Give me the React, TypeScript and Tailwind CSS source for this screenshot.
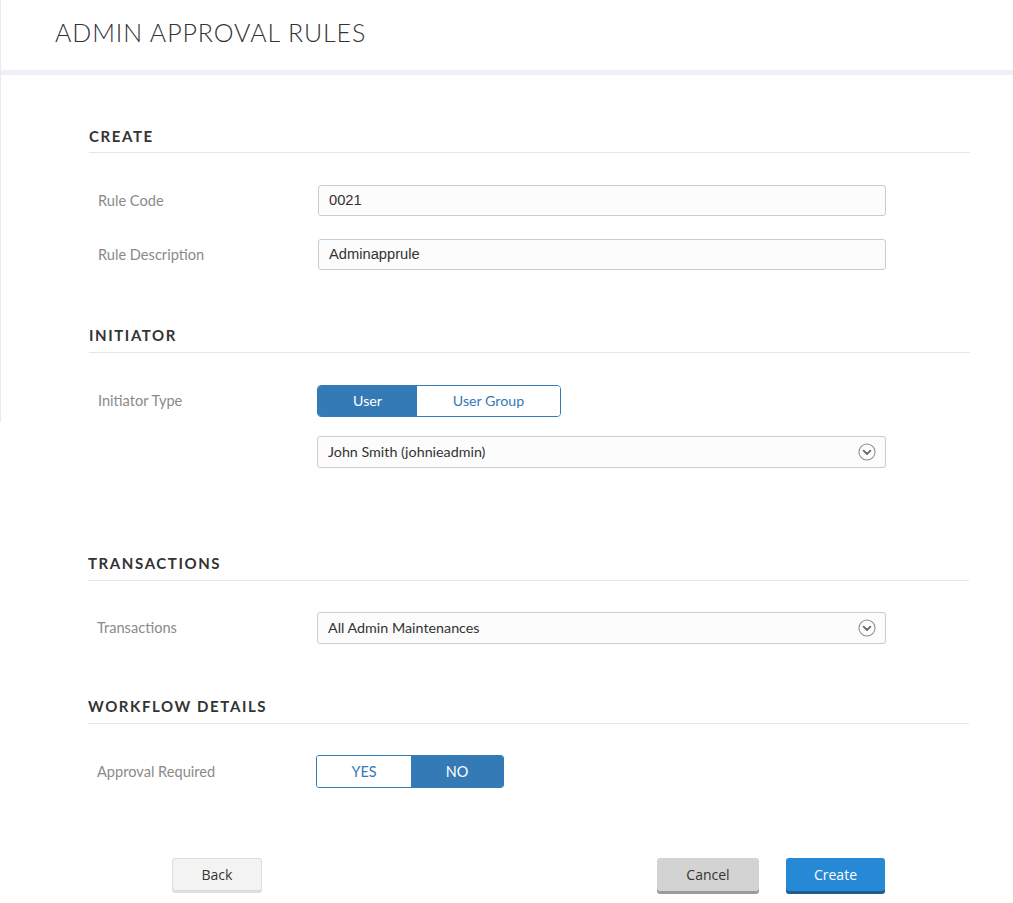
import React from "react";

const lato = "font-['Lato','Open_Sans',sans-serif]";

function Chevron() {
  return (
    <svg width="18" height="18" viewBox="0 0 18 18" className="shrink-0">
      <circle cx="9" cy="9" r="8" fill="none" stroke="#8f8f8f" strokeWidth="1.1" />
      <path d="M5.6 7.6 L9 11 L12.4 7.6" fill="none" stroke="#6a6a6a" strokeWidth="1.8" strokeLinecap="round" strokeLinejoin="round" />
    </svg>
  );
}

function Heading({ children, shift, tight }: { children: React.ReactNode; shift?: boolean; tight?: boolean }) {
  return (
    <div
      className={`${shift ? "ml-[88px]" : "ml-[89px]"} ${tight ? "pb-[6px]" : "pb-[7px]"} w-[881px] border-b border-[#e6e6e6] text-[15px] font-bold leading-[20px] tracking-[1.6px] text-[#333]`}
    >
      {children}
    </div>
  );
}

function Row({ label, children, shift }: { label: string; children: React.ReactNode; shift?: boolean }) {
  return (
    <div className={`${shift ? "ml-[88px]" : "ml-[89px]"} flex items-center`}>
      <div className="w-[229px] pl-[9px] text-[14.6px] leading-[20px] text-[#8a8a8a]">{label}</div>
      {children}
    </div>
  );
}

function TextInput({ value }: { value: string }) {
  return (
    <div className="flex h-[31px] w-[568px] items-center rounded-[3px] border border-[#cccccc] bg-[#fcfcfc] pl-[10px] font-['Liberation_Sans',Arial,sans-serif] text-[14.7px] text-[#333]">
      {value}
    </div>
  );
}

function Select({ value }: { value: string }) {
  return (
    <div className="flex h-[32px] w-[569px] items-center justify-between rounded-[3px] border border-[#cccccc] bg-[#fcfcfc] pl-[10px] pr-[9px] text-[14.3px] text-[#333]">
      <span>{value}</span>
      <Chevron />
    </div>
  );
}

export default function App() {
  return (
    <div className={`relative min-h-[903px] w-full bg-white ${lato}`}>
      <div className="absolute left-0 top-0 h-[422px] w-px bg-[#e9ebf0]" />
      <div className="h-[70px] pl-[55px] pt-[17px] text-[25px] font-light leading-[30px] tracking-[0.9px] text-[#333]">
        ADMIN APPROVAL RULES
      </div>
      <div className="h-[5px] w-full bg-[#eff0f5]" />

      <div className="pt-[51px]">
        <Heading tight>CREATE</Heading>
        <div className="mt-[32px]">
          <Row label="Rule Code">
            <TextInput value="0021" />
          </Row>
        </div>
        <div className="mt-[23px]">
          <Row label="Rule Description">
            <TextInput value="Adminapprule" />
          </Row>
        </div>

        <div className="mt-[55px]">
          <Heading>INITIATOR</Heading>
        </div>
        <div className="mt-[32px]">
          <div className="ml-[89px] flex items-center">
            <div className="w-[228px] pl-[9px] text-[14.6px] leading-[20px] text-[#8a8a8a]">Initiator Type</div>
            <div className="flex h-[32px] overflow-hidden rounded-[4px] border border-[#337ab7] text-[14.2px]">
              <div className="flex w-[99px] items-center justify-center bg-[#337ab7] text-white">User</div>
              <div className="flex w-[143px] items-center justify-center bg-white text-[#337ab7]">User Group</div>
            </div>
          </div>
        </div>
        <div className="ml-[317px] mt-[19px]">
          <Select value="John Smith (johnieadmin)" />
        </div>

        <div className="mt-[85px]">
          <Heading shift>TRANSACTIONS</Heading>
        </div>
        <div className="mt-[31px]">
          <Row label="Transactions" shift>
            <Select value="All Admin Maintenances" />
          </Row>
        </div>

        <div className="mt-[52px]">
          <Heading shift>WORKFLOW DETAILS</Heading>
        </div>
        <div className="mt-[31px]">
          <div className="ml-[88px] flex items-center">
            <div className="w-[228px] pl-[9px] text-[14.6px] leading-[20px] text-[#8a8a8a]">Approval Required</div>
            <div className="flex h-[33px] overflow-hidden rounded-[3px] border border-[#337ab7] text-[14.4px]">
              <div className="flex w-[94px] items-center justify-center bg-white text-[#337ab7]">YES</div>
              <div className="flex w-[92px] items-center justify-center bg-[#337ab7] text-white">NO</div>
            </div>
          </div>
        </div>

        <div className="mt-[70px] flex items-start font-['Open_Sans',sans-serif] text-[14px]">
          <button className="ml-[172px] h-[33px] w-[90px] rounded-[3px] border border-[#dcdcdc] bg-[#f3f3f3] text-[#333] shadow-[0_2px_0_#dedede]">
            Back
          </button>
          <button className="ml-[395px] h-[33px] w-[102px] rounded-[3px] bg-[#d3d3d3] text-[#333] shadow-[0_3px_0_#9b9b9b]">
            Cancel
          </button>
          <button className="ml-[27px] h-[33px] w-[99px] rounded-[3px] bg-[#2589d6] text-white shadow-[0_3px_0_#1d5e8f]">
            Create
          </button>
        </div>
      </div>
    </div>
  );
}
